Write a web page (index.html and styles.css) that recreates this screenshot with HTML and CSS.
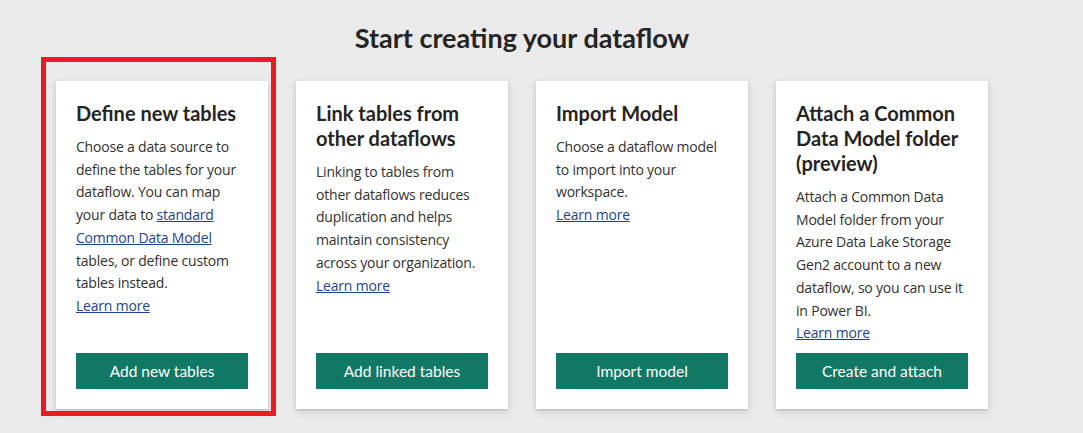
FILE: index.html
```html
<!DOCTYPE html>
<html lang="en">
<head>
    <meta charset="UTF-8">
    <meta name="viewport" content="width=device-width, initial-scale=1.0">
    <title>Start creating your dataflow</title>
    <link rel="stylesheet" href="styles.css">
</head>
<body>
    <div class="page">
        <h1>Start creating your dataflow</h1>
        <div class="cards">
            <div class="card selected">
                <h2>Define new tables</h2>
                <p>Choose a data source to define the tables for your dataflow. You can map your data to <a href="#">standard Common Data Model</a> tables, or define custom tables instead.</p>
                <a class="learn" href="#">Learn more</a>
                <button>Add new tables</button>
            </div>
            <div class="card">
                <h2>Link tables from other dataflows</h2>
                <p>Linking to tables from other dataflows reduces duplication and helps maintain consistency across your organization.</p>
                <a class="learn" href="#">Learn more</a>
                <button>Add linked tables</button>
            </div>
            <div class="card">
                <h2>Import Model</h2>
                <p>Choose a dataflow model to import into your workspace.</p>
                <a class="learn" href="#">Learn more</a>
                <button>Import model</button>
            </div>
            <div class="card">
                <h2>Attach a Common Data Model folder (preview)</h2>
                <p>Attach a Common Data Model folder from your Azure Data Lake Storage Gen2 account to a new dataflow, so you can use it in Power BI.</p>
                <a class="learn" href="#">Learn more</a>
                <button>Create and attach</button>
            </div>
        </div>
    </div>
</body>
</html>
```

FILE: styles.css
```css
body {
    margin: 0;
    background-color: #eaeaea;
    font-family: "Open Sans", Lato, sans-serif;
    color: #323130;
}

.page {
    width: 932px;
    margin-left: 56px;
    padding-top: 20px;
    padding-bottom: 17px;
}

h1 {
    margin: 0;
    text-align: center;
    font-family: Lato, sans-serif;
    font-size: 27px;
    line-height: 36px;
    font-weight: 700;
    color: #252423;
}

.cards {
    display: flex;
    align-items: flex-start;
    gap: 28px;
    margin-top: 25px;
}

.card {
    position: relative;
    width: 212px;
    height: 328px;
    box-sizing: border-box;
    padding: 20px;
    background-color: #fff;
    box-shadow: 0 3.2px 7.2px rgba(0, 0, 0, 0.132), 0 0.6px 1.8px rgba(0, 0, 0, 0.108);
    display: flex;
    flex-direction: column;
}

/* red annotation frame round the first card */
.card.selected::after {
    content: "";
    position: absolute;
    left: -15px;
    top: -24px;
    width: 235px;
    height: 359px;
    box-sizing: border-box;
    border: 5px solid #e81c23;
    pointer-events: none;
}

h2 {
    margin: 0 0 10px;
    font-family: Lato, sans-serif;
    font-size: 20px;
    line-height: 25px;
    font-weight: 700;
    color: #252423;
}

p {
    margin: 0;
    font-size: 14px;
    letter-spacing: -0.2px;
    line-height: 22.7px;
}

a {
    color: #1e3f96;
}

.learn {
    display: block;
    font-size: 14px;
    letter-spacing: -0.2px;
    line-height: 22.7px;
}

button {
    margin-top: auto;
    width: 172px;
    height: 36px;
    flex-shrink: 0;
    border: none;
    background-color: #117865;
    color: #fff;
    font-family: Lato, sans-serif;
    font-size: 15.5px;
    cursor: pointer;
}
```
